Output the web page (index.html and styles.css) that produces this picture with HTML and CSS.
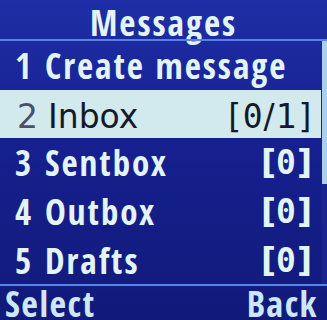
FILE: index.html
```html
<!DOCTYPE html>
<html>
<head>
<meta charset="utf-8">
<link rel="stylesheet" href="styles.css">
</head>
<body>
<div class="screen">
  <div class="title">Messages</div>
  <div class="rule"></div>
  <div class="main">
    <div class="list">
      <div class="row"><span class="num">1</span><span class="label">Create message</span></div>
      <div class="row sel"><span class="num">2</span><span class="label">Inbox</span><span class="count">[<span class="z">0</span>/1]</span></div>
      <div class="row"><span class="num">3</span><span class="label">Sentbox</span><span class="count">[<span class="z">0</span>]</span></div>
      <div class="row"><span class="num">4</span><span class="label">Outbox</span><span class="count">[<span class="z">0</span>]</span></div>
      <div class="row"><span class="num">5</span><span class="label">Drafts</span><span class="count">[<span class="z">0</span>]</span></div>
    </div>
    <div class="scroll"><div class="thumb"></div></div>
  </div>
  <div class="rule"></div>
  <div class="soft"><span>Select</span><span>Back</span></div>
</div>
</body>
</html>
```
FILE: styles.css
```css
html, body { margin: 0; padding: 0; }
body { width: 327px; height: 320px; overflow: hidden; background: #131c86; }
.screen {
  width: 327px; height: 320px; overflow: hidden;
  display: flex; flex-direction: column;
  background: linear-gradient(180deg, #1f2ea6 0%, #16208f 45%, #111a7a 100%);
  color: #e2f4f6;
  font-family: "Open Sans Condensed", "Roboto Condensed", sans-serif;
  font-weight: bold;
}
.title {
  height: 39px; flex: none; box-sizing: border-box; padding-top: 7px;
  text-align: center; font-size: 35px; line-height: 32px; letter-spacing: 2px;
}
.rule { height: 2px; flex: none; background: #5584e6; }
.main { height: 243px; flex: none; display: flex; }
.list { flex: 1; display: grid; grid-template-rows: repeat(5, 1fr); }
.row {
  display: flex; align-items: center;
  padding: 2px 9px 0 15px;
  font-size: 35px; line-height: 40px; letter-spacing: 2px;
}
.num { width: 30px; flex: none; }
.label { flex: 1; white-space: nowrap; }
.count { flex: none; font-family: "DejaVu Sans", sans-serif; font-size: 33px; letter-spacing: 0; }
.z { font-family: "DejaVu Sans Mono", monospace; letter-spacing: 1px; }
.sel { background: #d2e9ee; color: #151a2a; font-weight: normal; font-family: "DejaVu Sans", sans-serif; font-size: 33px; letter-spacing: 0; padding-top: 6px; }
.sel .num { color: #4a5068; padding-left: 2px; width: 31px; }
.sel .count { letter-spacing: 1.5px; margin-right: -1px; }
.scroll { width: 5px; margin-left: 1px; background: #1a2490; display: flex; flex-direction: column; }
.thumb { height: 143px; background: #a9d0f0; }
.soft {
  flex: 1; display: flex; justify-content: space-between;
  padding: 0 9px 0 5px;
  font-size: 36px; line-height: 36px; letter-spacing: 1.5px; color: #cfe6f6;
}
```
